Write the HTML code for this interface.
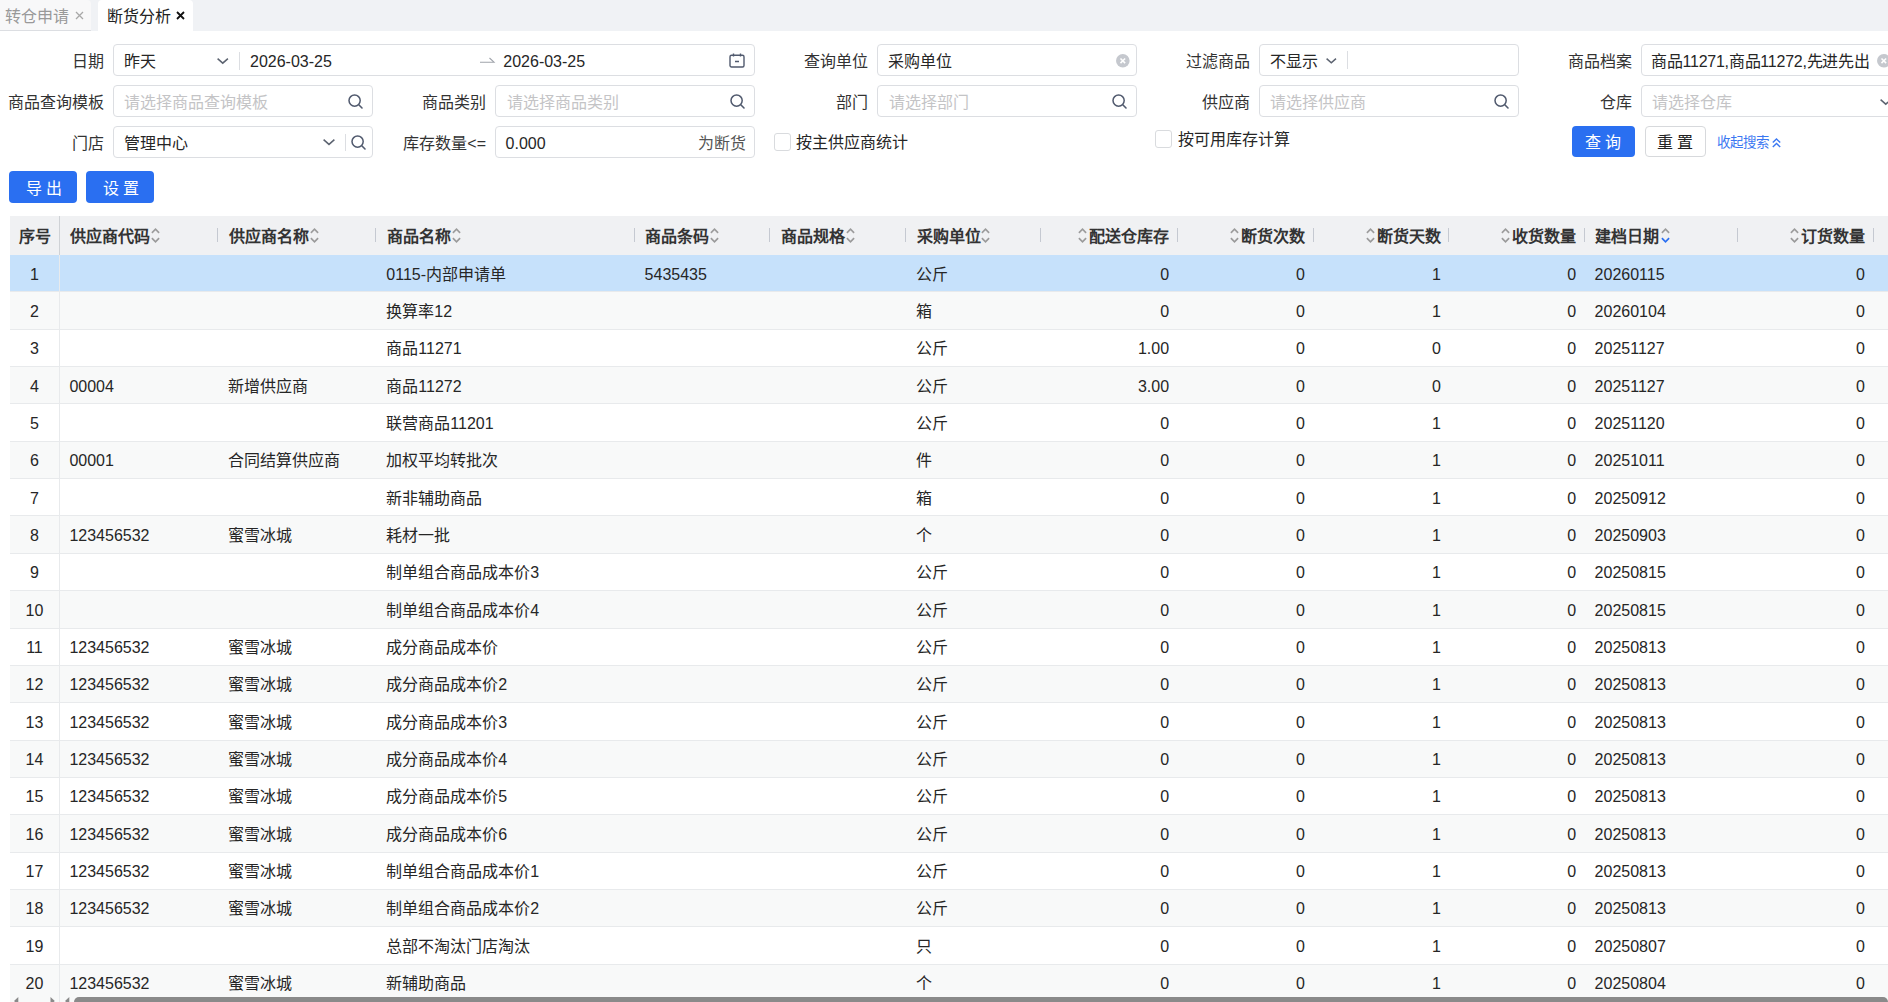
<!DOCTYPE html><html lang="zh-CN"><head><meta charset="utf-8"><style>
*{box-sizing:border-box;margin:0;padding:0}
html,body{width:1888px;height:1002px;overflow:hidden;background:#fff}
body{position:relative;font-family:"Liberation Sans",sans-serif;font-size:16px;color:#333}
.ab{position:absolute;white-space:nowrap}
.t{position:absolute;white-space:nowrap;line-height:20px;height:20px}
.box{position:absolute;border:1px solid #dcdee2;border-radius:4px;background:#fff}
.lab{position:absolute;white-space:nowrap;text-align:right;line-height:20px;color:#333}
.ph{color:#c4c4c6}
.val{color:#262626}
svg{position:absolute;overflow:visible}
.hd{font-weight:bold;color:#333}
</style></head><body>
<div class="ab" style="left:0;top:0;width:1888px;height:31px;background:#f0f2f5"></div>
<div class="ab" style="left:0;top:0;width:91px;height:31px;background:#f8f8f9;border-bottom:1px solid #dcdee2;border-top-right-radius:4px"></div>
<div class="t" style="left:5px;top:7px;color:#999">转仓申请</div>
<svg style="left:75px;top:11px" width="9" height="9" viewBox="0 0 9 9"><path d="M1 1L8 8M8 1L1 8" stroke="#a8a8a8" stroke-width="1.3"/></svg>
<div class="ab" style="left:98px;top:0;width:95px;height:31px;background:#fff;border-radius:4px 4px 0 0"></div>
<div class="t" style="left:107px;top:7px;color:#222">断货分析</div>
<svg style="left:176px;top:11px" width="9" height="9" viewBox="0 0 9 9"><path d="M1 1L8 8M8 1L1 8" stroke="#111" stroke-width="1.8"/></svg>
<div class="lab" style="right:1784.0px;top:51.5px">日期</div>
<div class="box" style="left:113px;top:44px;width:641.6px;height:32px"></div>
<div class="t val" style="left:123.6px;top:51.5px;">昨天</div>
<svg style="left:217px;top:57.6px" width="11.5" height="5.75" viewBox="0 0 11.5 5.75"><path d="M0.6 0.6L5.75 5.15L10.9 0.6" fill="none" stroke="#5c6370" stroke-width="1.5"/></svg>
<div class="ab" style="left:239px;top:52px;width:1px;height:18px;background:#dcdee2"></div>
<div class="t val" style="left:250px;top:51.5px;">2026-03-25</div>
<svg style="left:480px;top:57px" width="15" height="6" viewBox="0 0 15 6"><path d="M0 5.2H14L9.5 1" fill="none" stroke="#a0a4ab" stroke-width="1.1"/></svg>
<div class="t val" style="left:503.3px;top:51.5px;">2026-03-25</div>
<svg style="left:729px;top:53px" width="16" height="15" viewBox="0 0 16 15"><rect x="1" y="2.2" width="14" height="11.8" rx="1.5" fill="none" stroke="#515a6e" stroke-width="1.4"/><path d="M4.5 0.5V3.5M11.5 0.5V3.5M6 8.5H10" stroke="#515a6e" stroke-width="1.4"/></svg>
<div class="lab" style="right:1019.9px;top:51.5px">查询单位</div>
<div class="box" style="left:877px;top:44px;width:259.8px;height:32px"></div>
<div class="t val" style="left:887.8px;top:51.5px;">采购单位</div>
<svg style="left:1115.5px;top:53.6px" width="13.6" height="13.6" viewBox="0 0 14 14"><circle cx="7" cy="7" r="7" fill="#c5c8ce"/><path d="M4.6 4.6L9.4 9.4M9.4 4.6L4.6 9.4" stroke="#fff" stroke-width="1.6"/></svg>
<div class="lab" style="right:637.8px;top:51.5px">过滤商品</div>
<div class="box" style="left:1259px;top:44px;width:259.9px;height:32px"></div>
<div class="t val" style="left:1269.7px;top:51.5px;">不显示</div>
<svg style="left:1326px;top:57.9px" width="10.6" height="5.3" viewBox="0 0 10.6 5.3"><path d="M0.6 0.6L5.3 4.7L10.0 0.6" fill="none" stroke="#5c6370" stroke-width="1.5"/></svg>
<div class="ab" style="left:1346.6px;top:51px;width:1px;height:18px;background:#dcdee2"></div>
<div class="lab" style="right:255.7px;top:51.5px">商品档案</div>
<div class="box" style="left:1641px;top:44px;width:300.8px;height:32px"></div>
<div class="t val" style="left:1651px;top:51.5px;letter-spacing:-0.24px">商品11271,商品11272,先进先出</div>
<svg style="left:1877.2px;top:53.6px" width="13.6" height="13.6" viewBox="0 0 14 14"><circle cx="7" cy="7" r="7" fill="#c5c8ce"/><path d="M4.6 4.6L9.4 9.4M9.4 4.6L4.6 9.4" stroke="#fff" stroke-width="1.6"/></svg>
<div class="lab" style="right:1784.0px;top:92.5px">商品查询模板</div>
<div class="box" style="left:113px;top:85px;width:259.7px;height:32px"></div>
<div class="t ph" style="left:124px;top:92.5px;">请选择商品查询模板</div>
<svg style="left:348px;top:93.5px" width="15" height="15" viewBox="0 0 15 15"><circle cx="6.6" cy="6.6" r="5.6" fill="none" stroke="#515a6e" stroke-width="1.5"/><path d="M10.8 10.8L14 14" stroke="#515a6e" stroke-width="1.6" stroke-linecap="round"/></svg>
<div class="lab" style="right:1402.0px;top:92.5px">商品类别</div>
<div class="box" style="left:495px;top:85px;width:259.7px;height:32px"></div>
<div class="t ph" style="left:506.5px;top:92.5px;">请选择商品类别</div>
<svg style="left:730px;top:93.5px" width="15" height="15" viewBox="0 0 15 15"><circle cx="6.6" cy="6.6" r="5.6" fill="none" stroke="#515a6e" stroke-width="1.5"/><path d="M10.8 10.8L14 14" stroke="#515a6e" stroke-width="1.6" stroke-linecap="round"/></svg>
<div class="lab" style="right:1019.9px;top:92.5px">部门</div>
<div class="box" style="left:877px;top:85px;width:259.8px;height:32px"></div>
<div class="t ph" style="left:888.6px;top:92.5px;">请选择部门</div>
<svg style="left:1112px;top:93.5px" width="15" height="15" viewBox="0 0 15 15"><circle cx="6.6" cy="6.6" r="5.6" fill="none" stroke="#515a6e" stroke-width="1.5"/><path d="M10.8 10.8L14 14" stroke="#515a6e" stroke-width="1.6" stroke-linecap="round"/></svg>
<div class="lab" style="right:637.8px;top:92.5px">供应商</div>
<div class="box" style="left:1259px;top:85px;width:259.9px;height:32px"></div>
<div class="t ph" style="left:1270.3px;top:92.5px;">请选择供应商</div>
<svg style="left:1493.8px;top:93.5px" width="15" height="15" viewBox="0 0 15 15"><circle cx="6.6" cy="6.6" r="5.6" fill="none" stroke="#515a6e" stroke-width="1.5"/><path d="M10.8 10.8L14 14" stroke="#515a6e" stroke-width="1.6" stroke-linecap="round"/></svg>
<div class="lab" style="right:255.7px;top:92.5px">仓库</div>
<div class="box" style="left:1641px;top:85px;width:300.8px;height:32px"></div>
<div class="t ph" style="left:1651.7px;top:92.5px;">请选择仓库</div>
<svg style="left:1879.8px;top:98.6px" width="11.5" height="5.75" viewBox="0 0 11.5 5.75"><path d="M0.6 0.6L5.75 5.15L10.9 0.6" fill="none" stroke="#5c6370" stroke-width="1.5"/></svg>
<div class="lab" style="right:1784.0px;top:133.5px">门店</div>
<div class="box" style="left:113px;top:126px;width:259.7px;height:32px"></div>
<div class="t val" style="left:124px;top:133.5px;">管理中心</div>
<svg style="left:322.5px;top:138.8px" width="12" height="6.0" viewBox="0 0 12 6.0"><path d="M0.6 0.6L6.0 5.4L11.4 0.6" fill="none" stroke="#5c6370" stroke-width="1.5"/></svg>
<div class="ab" style="left:344.5px;top:133.5px;width:1px;height:17.5px;background:#dcdee2"></div>
<svg style="left:350.6px;top:134.5px" width="15" height="15" viewBox="0 0 15 15"><circle cx="6.6" cy="6.6" r="5.6" fill="none" stroke="#515a6e" stroke-width="1.5"/><path d="M10.8 10.8L14 14" stroke="#515a6e" stroke-width="1.6" stroke-linecap="round"/></svg>
<div class="lab" style="right:1402.0px;top:133.5px">库存数量&lt;=</div>
<div class="box" style="left:495px;top:126px;width:259.7px;height:32px"></div>
<div class="t val" style="left:505.6px;top:133.5px;">0.000</div>
<div class="t " style="left:698.4px;top:133.5px;color:#555">为断货</div>
<div class="box" style="left:773.5px;top:133px;width:17.5px;height:17.5px;border-radius:3px;border-color:#d9dbde"></div>
<div class="t" style="left:796.3px;top:132.8px;color:#262626">按主供应商统计</div>
<div class="box" style="left:1154.5px;top:130.3px;width:17.5px;height:17.5px;border-radius:3px;border-color:#d9dbde"></div>
<div class="t" style="left:1177.5px;top:129.8px;color:#262626">按可用库存计算</div>
<div class="ab" style="left:1572px;top:126.2px;width:62.6px;height:31.2px;background:#2a6ff1;border-radius:4px"></div>
<div class="t" style="left:1585px;top:133.2px;color:#fff;letter-spacing:4px;font-weight:500">查询</div>
<div class="box" style="left:1644.5px;top:126.2px;width:61.5px;height:31.2px;border-color:#d7d9dc"></div>
<div class="t" style="left:1657px;top:133.2px;color:#222;letter-spacing:4px;font-weight:500">重置</div>
<div class="t" style="left:1717px;top:132.5px;color:#3b78f2;font-size:13.5px">收起搜索</div>
<svg style="left:1772px;top:137.5px" width="9" height="10" viewBox="0 0 9 10"><path d="M0.8 4.6L4.5 1L8.2 4.6M0.8 9L4.5 5.4L8.2 9" fill="none" stroke="#3b78f2" stroke-width="1.4"/></svg>
<div class="ab" style="left:9.2px;top:171.1px;width:67.8px;height:31.8px;background:#2a6ff1;border-radius:4px"></div>
<div class="t" style="left:26px;top:179px;color:#fff;letter-spacing:4px;font-weight:500">导出</div>
<div class="ab" style="left:86.4px;top:171.1px;width:67.5px;height:31.8px;background:#2a6ff1;border-radius:4px"></div>
<div class="t" style="left:103px;top:179px;color:#fff;letter-spacing:4px;font-weight:500">设置</div>
<div class="ab" style="left:9.5px;top:216.2px;width:1878.5px;height:38.400000000000006px;background:#f0f1f3"></div>
<div class="ab" style="left:9.5px;top:254.60px;width:1878.5px;height:37.34px;background:#c6e1fb"></div>
<div class="t" style="left:9.5px;width:49.9px;text-align:center;top:264.57px;color:#262626">1</div>
<div class="t" style="left:386.3px;top:264.57px;color:#262626">0115-内部申请单</div>
<div class="t" style="left:644.6px;top:264.57px;color:#262626">5435435</div>
<div class="t" style="left:915.8px;top:264.57px;color:#262626">公斤</div>
<div class="t" style="right:718.9px;top:264.57px;color:#262626">0</div>
<div class="t" style="right:583.0px;top:264.57px;color:#262626">0</div>
<div class="t" style="right:447.1px;top:264.57px;color:#262626">1</div>
<div class="t" style="right:311.9px;top:264.57px;color:#262626">0</div>
<div class="t" style="left:1594.6px;top:264.57px;color:#262626">20260115</div>
<div class="t" style="right:23.0px;top:264.57px;color:#262626">0</div>
<div class="ab" style="left:9.5px;top:291.94px;width:1878.5px;height:37.34px;background:#f8f9f9"></div>
<div class="ab" style="left:9.5px;top:291.44px;width:1878.5px;height:1px;background:#e8eaec"></div>
<div class="t" style="left:9.5px;width:49.9px;text-align:center;top:301.91px;color:#262626">2</div>
<div class="t" style="left:386.3px;top:301.91px;color:#262626">换算率12</div>
<div class="t" style="left:915.8px;top:301.91px;color:#262626">箱</div>
<div class="t" style="right:718.9px;top:301.91px;color:#262626">0</div>
<div class="t" style="right:583.0px;top:301.91px;color:#262626">0</div>
<div class="t" style="right:447.1px;top:301.91px;color:#262626">1</div>
<div class="t" style="right:311.9px;top:301.91px;color:#262626">0</div>
<div class="t" style="left:1594.6px;top:301.91px;color:#262626">20260104</div>
<div class="t" style="right:23.0px;top:301.91px;color:#262626">0</div>
<div class="ab" style="left:9.5px;top:329.28px;width:1878.5px;height:37.34px;background:#fff"></div>
<div class="ab" style="left:9.5px;top:328.78px;width:1878.5px;height:1px;background:#e8eaec"></div>
<div class="t" style="left:9.5px;width:49.9px;text-align:center;top:339.25px;color:#262626">3</div>
<div class="t" style="left:386.3px;top:339.25px;color:#262626">商品11271</div>
<div class="t" style="left:915.8px;top:339.25px;color:#262626">公斤</div>
<div class="t" style="right:718.9px;top:339.25px;color:#262626">1.00</div>
<div class="t" style="right:583.0px;top:339.25px;color:#262626">0</div>
<div class="t" style="right:447.1px;top:339.25px;color:#262626">0</div>
<div class="t" style="right:311.9px;top:339.25px;color:#262626">0</div>
<div class="t" style="left:1594.6px;top:339.25px;color:#262626">20251127</div>
<div class="t" style="right:23.0px;top:339.25px;color:#262626">0</div>
<div class="ab" style="left:9.5px;top:366.62px;width:1878.5px;height:37.34px;background:#f8f9f9"></div>
<div class="ab" style="left:9.5px;top:366.12px;width:1878.5px;height:1px;background:#e8eaec"></div>
<div class="t" style="left:9.5px;width:49.9px;text-align:center;top:376.59px;color:#262626">4</div>
<div class="t" style="left:69.4px;top:376.59px;color:#262626">00004</div>
<div class="t" style="left:228.0px;top:376.59px;color:#262626">新增供应商</div>
<div class="t" style="left:386.3px;top:376.59px;color:#262626">商品11272</div>
<div class="t" style="left:915.8px;top:376.59px;color:#262626">公斤</div>
<div class="t" style="right:718.9px;top:376.59px;color:#262626">3.00</div>
<div class="t" style="right:583.0px;top:376.59px;color:#262626">0</div>
<div class="t" style="right:447.1px;top:376.59px;color:#262626">0</div>
<div class="t" style="right:311.9px;top:376.59px;color:#262626">0</div>
<div class="t" style="left:1594.6px;top:376.59px;color:#262626">20251127</div>
<div class="t" style="right:23.0px;top:376.59px;color:#262626">0</div>
<div class="ab" style="left:9.5px;top:403.96px;width:1878.5px;height:37.34px;background:#fff"></div>
<div class="ab" style="left:9.5px;top:403.46px;width:1878.5px;height:1px;background:#e8eaec"></div>
<div class="t" style="left:9.5px;width:49.9px;text-align:center;top:413.93px;color:#262626">5</div>
<div class="t" style="left:386.3px;top:413.93px;color:#262626">联营商品11201</div>
<div class="t" style="left:915.8px;top:413.93px;color:#262626">公斤</div>
<div class="t" style="right:718.9px;top:413.93px;color:#262626">0</div>
<div class="t" style="right:583.0px;top:413.93px;color:#262626">0</div>
<div class="t" style="right:447.1px;top:413.93px;color:#262626">1</div>
<div class="t" style="right:311.9px;top:413.93px;color:#262626">0</div>
<div class="t" style="left:1594.6px;top:413.93px;color:#262626">20251120</div>
<div class="t" style="right:23.0px;top:413.93px;color:#262626">0</div>
<div class="ab" style="left:9.5px;top:441.30px;width:1878.5px;height:37.34px;background:#f8f9f9"></div>
<div class="ab" style="left:9.5px;top:440.80px;width:1878.5px;height:1px;background:#e8eaec"></div>
<div class="t" style="left:9.5px;width:49.9px;text-align:center;top:451.27px;color:#262626">6</div>
<div class="t" style="left:69.4px;top:451.27px;color:#262626">00001</div>
<div class="t" style="left:228.0px;top:451.27px;color:#262626">合同结算供应商</div>
<div class="t" style="left:386.3px;top:451.27px;color:#262626">加权平均转批次</div>
<div class="t" style="left:915.8px;top:451.27px;color:#262626">件</div>
<div class="t" style="right:718.9px;top:451.27px;color:#262626">0</div>
<div class="t" style="right:583.0px;top:451.27px;color:#262626">0</div>
<div class="t" style="right:447.1px;top:451.27px;color:#262626">1</div>
<div class="t" style="right:311.9px;top:451.27px;color:#262626">0</div>
<div class="t" style="left:1594.6px;top:451.27px;color:#262626">20251011</div>
<div class="t" style="right:23.0px;top:451.27px;color:#262626">0</div>
<div class="ab" style="left:9.5px;top:478.64px;width:1878.5px;height:37.34px;background:#fff"></div>
<div class="ab" style="left:9.5px;top:478.14px;width:1878.5px;height:1px;background:#e8eaec"></div>
<div class="t" style="left:9.5px;width:49.9px;text-align:center;top:488.61px;color:#262626">7</div>
<div class="t" style="left:386.3px;top:488.61px;color:#262626">新非辅助商品</div>
<div class="t" style="left:915.8px;top:488.61px;color:#262626">箱</div>
<div class="t" style="right:718.9px;top:488.61px;color:#262626">0</div>
<div class="t" style="right:583.0px;top:488.61px;color:#262626">0</div>
<div class="t" style="right:447.1px;top:488.61px;color:#262626">1</div>
<div class="t" style="right:311.9px;top:488.61px;color:#262626">0</div>
<div class="t" style="left:1594.6px;top:488.61px;color:#262626">20250912</div>
<div class="t" style="right:23.0px;top:488.61px;color:#262626">0</div>
<div class="ab" style="left:9.5px;top:515.98px;width:1878.5px;height:37.34px;background:#f8f9f9"></div>
<div class="ab" style="left:9.5px;top:515.48px;width:1878.5px;height:1px;background:#e8eaec"></div>
<div class="t" style="left:9.5px;width:49.9px;text-align:center;top:525.95px;color:#262626">8</div>
<div class="t" style="left:69.4px;top:525.95px;color:#262626">123456532</div>
<div class="t" style="left:228.0px;top:525.95px;color:#262626">蜜雪冰城</div>
<div class="t" style="left:386.3px;top:525.95px;color:#262626">耗材一批</div>
<div class="t" style="left:915.8px;top:525.95px;color:#262626">个</div>
<div class="t" style="right:718.9px;top:525.95px;color:#262626">0</div>
<div class="t" style="right:583.0px;top:525.95px;color:#262626">0</div>
<div class="t" style="right:447.1px;top:525.95px;color:#262626">1</div>
<div class="t" style="right:311.9px;top:525.95px;color:#262626">0</div>
<div class="t" style="left:1594.6px;top:525.95px;color:#262626">20250903</div>
<div class="t" style="right:23.0px;top:525.95px;color:#262626">0</div>
<div class="ab" style="left:9.5px;top:553.32px;width:1878.5px;height:37.34px;background:#fff"></div>
<div class="ab" style="left:9.5px;top:552.82px;width:1878.5px;height:1px;background:#e8eaec"></div>
<div class="t" style="left:9.5px;width:49.9px;text-align:center;top:563.29px;color:#262626">9</div>
<div class="t" style="left:386.3px;top:563.29px;color:#262626">制单组合商品成本价3</div>
<div class="t" style="left:915.8px;top:563.29px;color:#262626">公斤</div>
<div class="t" style="right:718.9px;top:563.29px;color:#262626">0</div>
<div class="t" style="right:583.0px;top:563.29px;color:#262626">0</div>
<div class="t" style="right:447.1px;top:563.29px;color:#262626">1</div>
<div class="t" style="right:311.9px;top:563.29px;color:#262626">0</div>
<div class="t" style="left:1594.6px;top:563.29px;color:#262626">20250815</div>
<div class="t" style="right:23.0px;top:563.29px;color:#262626">0</div>
<div class="ab" style="left:9.5px;top:590.66px;width:1878.5px;height:37.34px;background:#f8f9f9"></div>
<div class="ab" style="left:9.5px;top:590.16px;width:1878.5px;height:1px;background:#e8eaec"></div>
<div class="t" style="left:9.5px;width:49.9px;text-align:center;top:600.63px;color:#262626">10</div>
<div class="t" style="left:386.3px;top:600.63px;color:#262626">制单组合商品成本价4</div>
<div class="t" style="left:915.8px;top:600.63px;color:#262626">公斤</div>
<div class="t" style="right:718.9px;top:600.63px;color:#262626">0</div>
<div class="t" style="right:583.0px;top:600.63px;color:#262626">0</div>
<div class="t" style="right:447.1px;top:600.63px;color:#262626">1</div>
<div class="t" style="right:311.9px;top:600.63px;color:#262626">0</div>
<div class="t" style="left:1594.6px;top:600.63px;color:#262626">20250815</div>
<div class="t" style="right:23.0px;top:600.63px;color:#262626">0</div>
<div class="ab" style="left:9.5px;top:628.00px;width:1878.5px;height:37.34px;background:#fff"></div>
<div class="ab" style="left:9.5px;top:627.50px;width:1878.5px;height:1px;background:#e8eaec"></div>
<div class="t" style="left:9.5px;width:49.9px;text-align:center;top:637.97px;color:#262626">11</div>
<div class="t" style="left:69.4px;top:637.97px;color:#262626">123456532</div>
<div class="t" style="left:228.0px;top:637.97px;color:#262626">蜜雪冰城</div>
<div class="t" style="left:386.3px;top:637.97px;color:#262626">成分商品成本价</div>
<div class="t" style="left:915.8px;top:637.97px;color:#262626">公斤</div>
<div class="t" style="right:718.9px;top:637.97px;color:#262626">0</div>
<div class="t" style="right:583.0px;top:637.97px;color:#262626">0</div>
<div class="t" style="right:447.1px;top:637.97px;color:#262626">1</div>
<div class="t" style="right:311.9px;top:637.97px;color:#262626">0</div>
<div class="t" style="left:1594.6px;top:637.97px;color:#262626">20250813</div>
<div class="t" style="right:23.0px;top:637.97px;color:#262626">0</div>
<div class="ab" style="left:9.5px;top:665.34px;width:1878.5px;height:37.34px;background:#f8f9f9"></div>
<div class="ab" style="left:9.5px;top:664.84px;width:1878.5px;height:1px;background:#e8eaec"></div>
<div class="t" style="left:9.5px;width:49.9px;text-align:center;top:675.31px;color:#262626">12</div>
<div class="t" style="left:69.4px;top:675.31px;color:#262626">123456532</div>
<div class="t" style="left:228.0px;top:675.31px;color:#262626">蜜雪冰城</div>
<div class="t" style="left:386.3px;top:675.31px;color:#262626">成分商品成本价2</div>
<div class="t" style="left:915.8px;top:675.31px;color:#262626">公斤</div>
<div class="t" style="right:718.9px;top:675.31px;color:#262626">0</div>
<div class="t" style="right:583.0px;top:675.31px;color:#262626">0</div>
<div class="t" style="right:447.1px;top:675.31px;color:#262626">1</div>
<div class="t" style="right:311.9px;top:675.31px;color:#262626">0</div>
<div class="t" style="left:1594.6px;top:675.31px;color:#262626">20250813</div>
<div class="t" style="right:23.0px;top:675.31px;color:#262626">0</div>
<div class="ab" style="left:9.5px;top:702.68px;width:1878.5px;height:37.34px;background:#fff"></div>
<div class="ab" style="left:9.5px;top:702.18px;width:1878.5px;height:1px;background:#e8eaec"></div>
<div class="t" style="left:9.5px;width:49.9px;text-align:center;top:712.65px;color:#262626">13</div>
<div class="t" style="left:69.4px;top:712.65px;color:#262626">123456532</div>
<div class="t" style="left:228.0px;top:712.65px;color:#262626">蜜雪冰城</div>
<div class="t" style="left:386.3px;top:712.65px;color:#262626">成分商品成本价3</div>
<div class="t" style="left:915.8px;top:712.65px;color:#262626">公斤</div>
<div class="t" style="right:718.9px;top:712.65px;color:#262626">0</div>
<div class="t" style="right:583.0px;top:712.65px;color:#262626">0</div>
<div class="t" style="right:447.1px;top:712.65px;color:#262626">1</div>
<div class="t" style="right:311.9px;top:712.65px;color:#262626">0</div>
<div class="t" style="left:1594.6px;top:712.65px;color:#262626">20250813</div>
<div class="t" style="right:23.0px;top:712.65px;color:#262626">0</div>
<div class="ab" style="left:9.5px;top:740.02px;width:1878.5px;height:37.34px;background:#f8f9f9"></div>
<div class="ab" style="left:9.5px;top:739.52px;width:1878.5px;height:1px;background:#e8eaec"></div>
<div class="t" style="left:9.5px;width:49.9px;text-align:center;top:749.99px;color:#262626">14</div>
<div class="t" style="left:69.4px;top:749.99px;color:#262626">123456532</div>
<div class="t" style="left:228.0px;top:749.99px;color:#262626">蜜雪冰城</div>
<div class="t" style="left:386.3px;top:749.99px;color:#262626">成分商品成本价4</div>
<div class="t" style="left:915.8px;top:749.99px;color:#262626">公斤</div>
<div class="t" style="right:718.9px;top:749.99px;color:#262626">0</div>
<div class="t" style="right:583.0px;top:749.99px;color:#262626">0</div>
<div class="t" style="right:447.1px;top:749.99px;color:#262626">1</div>
<div class="t" style="right:311.9px;top:749.99px;color:#262626">0</div>
<div class="t" style="left:1594.6px;top:749.99px;color:#262626">20250813</div>
<div class="t" style="right:23.0px;top:749.99px;color:#262626">0</div>
<div class="ab" style="left:9.5px;top:777.36px;width:1878.5px;height:37.34px;background:#fff"></div>
<div class="ab" style="left:9.5px;top:776.86px;width:1878.5px;height:1px;background:#e8eaec"></div>
<div class="t" style="left:9.5px;width:49.9px;text-align:center;top:787.33px;color:#262626">15</div>
<div class="t" style="left:69.4px;top:787.33px;color:#262626">123456532</div>
<div class="t" style="left:228.0px;top:787.33px;color:#262626">蜜雪冰城</div>
<div class="t" style="left:386.3px;top:787.33px;color:#262626">成分商品成本价5</div>
<div class="t" style="left:915.8px;top:787.33px;color:#262626">公斤</div>
<div class="t" style="right:718.9px;top:787.33px;color:#262626">0</div>
<div class="t" style="right:583.0px;top:787.33px;color:#262626">0</div>
<div class="t" style="right:447.1px;top:787.33px;color:#262626">1</div>
<div class="t" style="right:311.9px;top:787.33px;color:#262626">0</div>
<div class="t" style="left:1594.6px;top:787.33px;color:#262626">20250813</div>
<div class="t" style="right:23.0px;top:787.33px;color:#262626">0</div>
<div class="ab" style="left:9.5px;top:814.70px;width:1878.5px;height:37.34px;background:#f8f9f9"></div>
<div class="ab" style="left:9.5px;top:814.20px;width:1878.5px;height:1px;background:#e8eaec"></div>
<div class="t" style="left:9.5px;width:49.9px;text-align:center;top:824.67px;color:#262626">16</div>
<div class="t" style="left:69.4px;top:824.67px;color:#262626">123456532</div>
<div class="t" style="left:228.0px;top:824.67px;color:#262626">蜜雪冰城</div>
<div class="t" style="left:386.3px;top:824.67px;color:#262626">成分商品成本价6</div>
<div class="t" style="left:915.8px;top:824.67px;color:#262626">公斤</div>
<div class="t" style="right:718.9px;top:824.67px;color:#262626">0</div>
<div class="t" style="right:583.0px;top:824.67px;color:#262626">0</div>
<div class="t" style="right:447.1px;top:824.67px;color:#262626">1</div>
<div class="t" style="right:311.9px;top:824.67px;color:#262626">0</div>
<div class="t" style="left:1594.6px;top:824.67px;color:#262626">20250813</div>
<div class="t" style="right:23.0px;top:824.67px;color:#262626">0</div>
<div class="ab" style="left:9.5px;top:852.04px;width:1878.5px;height:37.34px;background:#fff"></div>
<div class="ab" style="left:9.5px;top:851.54px;width:1878.5px;height:1px;background:#e8eaec"></div>
<div class="t" style="left:9.5px;width:49.9px;text-align:center;top:862.01px;color:#262626">17</div>
<div class="t" style="left:69.4px;top:862.01px;color:#262626">123456532</div>
<div class="t" style="left:228.0px;top:862.01px;color:#262626">蜜雪冰城</div>
<div class="t" style="left:386.3px;top:862.01px;color:#262626">制单组合商品成本价1</div>
<div class="t" style="left:915.8px;top:862.01px;color:#262626">公斤</div>
<div class="t" style="right:718.9px;top:862.01px;color:#262626">0</div>
<div class="t" style="right:583.0px;top:862.01px;color:#262626">0</div>
<div class="t" style="right:447.1px;top:862.01px;color:#262626">1</div>
<div class="t" style="right:311.9px;top:862.01px;color:#262626">0</div>
<div class="t" style="left:1594.6px;top:862.01px;color:#262626">20250813</div>
<div class="t" style="right:23.0px;top:862.01px;color:#262626">0</div>
<div class="ab" style="left:9.5px;top:889.38px;width:1878.5px;height:37.34px;background:#f8f9f9"></div>
<div class="ab" style="left:9.5px;top:888.88px;width:1878.5px;height:1px;background:#e8eaec"></div>
<div class="t" style="left:9.5px;width:49.9px;text-align:center;top:899.35px;color:#262626">18</div>
<div class="t" style="left:69.4px;top:899.35px;color:#262626">123456532</div>
<div class="t" style="left:228.0px;top:899.35px;color:#262626">蜜雪冰城</div>
<div class="t" style="left:386.3px;top:899.35px;color:#262626">制单组合商品成本价2</div>
<div class="t" style="left:915.8px;top:899.35px;color:#262626">公斤</div>
<div class="t" style="right:718.9px;top:899.35px;color:#262626">0</div>
<div class="t" style="right:583.0px;top:899.35px;color:#262626">0</div>
<div class="t" style="right:447.1px;top:899.35px;color:#262626">1</div>
<div class="t" style="right:311.9px;top:899.35px;color:#262626">0</div>
<div class="t" style="left:1594.6px;top:899.35px;color:#262626">20250813</div>
<div class="t" style="right:23.0px;top:899.35px;color:#262626">0</div>
<div class="ab" style="left:9.5px;top:926.72px;width:1878.5px;height:37.34px;background:#fff"></div>
<div class="ab" style="left:9.5px;top:926.22px;width:1878.5px;height:1px;background:#e8eaec"></div>
<div class="t" style="left:9.5px;width:49.9px;text-align:center;top:936.69px;color:#262626">19</div>
<div class="t" style="left:386.3px;top:936.69px;color:#262626">总部不淘汰门店淘汰</div>
<div class="t" style="left:915.8px;top:936.69px;color:#262626">只</div>
<div class="t" style="right:718.9px;top:936.69px;color:#262626">0</div>
<div class="t" style="right:583.0px;top:936.69px;color:#262626">0</div>
<div class="t" style="right:447.1px;top:936.69px;color:#262626">1</div>
<div class="t" style="right:311.9px;top:936.69px;color:#262626">0</div>
<div class="t" style="left:1594.6px;top:936.69px;color:#262626">20250807</div>
<div class="t" style="right:23.0px;top:936.69px;color:#262626">0</div>
<div class="ab" style="left:9.5px;top:964.06px;width:1878.5px;height:37.94px;background:#f8f9f9"></div>
<div class="ab" style="left:9.5px;top:963.56px;width:1878.5px;height:1px;background:#e8eaec"></div>
<div class="t" style="left:9.5px;width:49.9px;text-align:center;top:974.03px;color:#262626">20</div>
<div class="t" style="left:69.4px;top:974.03px;color:#262626">123456532</div>
<div class="t" style="left:228.0px;top:974.03px;color:#262626">蜜雪冰城</div>
<div class="t" style="left:386.3px;top:974.03px;color:#262626">新辅助商品</div>
<div class="t" style="left:915.8px;top:974.03px;color:#262626">个</div>
<div class="t" style="right:718.9px;top:974.03px;color:#262626">0</div>
<div class="t" style="right:583.0px;top:974.03px;color:#262626">0</div>
<div class="t" style="right:447.1px;top:974.03px;color:#262626">1</div>
<div class="t" style="right:311.9px;top:974.03px;color:#262626">0</div>
<div class="t" style="left:1594.6px;top:974.03px;color:#262626">20250804</div>
<div class="t" style="right:23.0px;top:974.03px;color:#262626">0</div>
<div class="ab" style="left:59px;top:216.2px;width:1px;height:38.400000000000006px;background:#cfd2d6"></div>
<div class="ab" style="left:59px;top:254.6px;width:1px;height:747.4px;background:#e8eaec"></div>
<div class="t hd" style="left:9.5px;width:50px;text-align:center;top:226.9px">序号</div>
<div class="t hd" style="left:70.1px;top:226.9px">供应商代码</div>
<svg style="left:150.9px;top:228px" width="9" height="15" viewBox="0 0 9 15"><path d="M0.9 4.8L4.5 1.2L8.1 4.8" fill="none" stroke="#9c9c9c" stroke-width="1.7"/><path d="M0.9 10.2L4.5 13.8L8.1 10.2" fill="none" stroke="#9a9a9a" stroke-width="1.7"/></svg>
<div class="t hd" style="left:228.7px;top:226.9px">供应商名称</div>
<svg style="left:309.5px;top:228px" width="9" height="15" viewBox="0 0 9 15"><path d="M0.9 4.8L4.5 1.2L8.1 4.8" fill="none" stroke="#9c9c9c" stroke-width="1.7"/><path d="M0.9 10.2L4.5 13.8L8.1 10.2" fill="none" stroke="#9a9a9a" stroke-width="1.7"/></svg>
<div class="t hd" style="left:387.0px;top:226.9px">商品名称</div>
<svg style="left:451.8px;top:228px" width="9" height="15" viewBox="0 0 9 15"><path d="M0.9 4.8L4.5 1.2L8.1 4.8" fill="none" stroke="#9c9c9c" stroke-width="1.7"/><path d="M0.9 10.2L4.5 13.8L8.1 10.2" fill="none" stroke="#9a9a9a" stroke-width="1.7"/></svg>
<div class="t hd" style="left:645.3px;top:226.9px">商品条码</div>
<svg style="left:710.1px;top:228px" width="9" height="15" viewBox="0 0 9 15"><path d="M0.9 4.8L4.5 1.2L8.1 4.8" fill="none" stroke="#9c9c9c" stroke-width="1.7"/><path d="M0.9 10.2L4.5 13.8L8.1 10.2" fill="none" stroke="#9a9a9a" stroke-width="1.7"/></svg>
<div class="t hd" style="left:780.9px;top:226.9px">商品规格</div>
<svg style="left:845.7px;top:228px" width="9" height="15" viewBox="0 0 9 15"><path d="M0.9 4.8L4.5 1.2L8.1 4.8" fill="none" stroke="#9c9c9c" stroke-width="1.7"/><path d="M0.9 10.2L4.5 13.8L8.1 10.2" fill="none" stroke="#9a9a9a" stroke-width="1.7"/></svg>
<div class="t hd" style="left:916.5px;top:226.9px">采购单位</div>
<svg style="left:981.3px;top:228px" width="9" height="15" viewBox="0 0 9 15"><path d="M0.9 4.8L4.5 1.2L8.1 4.8" fill="none" stroke="#9c9c9c" stroke-width="1.7"/><path d="M0.9 10.2L4.5 13.8L8.1 10.2" fill="none" stroke="#9a9a9a" stroke-width="1.7"/></svg>
<div class="t hd" style="right:718.9px;top:226.9px">配送仓库存</div>
<svg style="left:1078.1px;top:228px" width="9" height="15" viewBox="0 0 9 15"><path d="M0.9 4.8L4.5 1.2L8.1 4.8" fill="none" stroke="#9c9c9c" stroke-width="1.7"/><path d="M0.9 10.2L4.5 13.8L8.1 10.2" fill="none" stroke="#9a9a9a" stroke-width="1.7"/></svg>
<div class="t hd" style="right:583.0px;top:226.9px">断货次数</div>
<svg style="left:1230.0px;top:228px" width="9" height="15" viewBox="0 0 9 15"><path d="M0.9 4.8L4.5 1.2L8.1 4.8" fill="none" stroke="#9c9c9c" stroke-width="1.7"/><path d="M0.9 10.2L4.5 13.8L8.1 10.2" fill="none" stroke="#9a9a9a" stroke-width="1.7"/></svg>
<div class="t hd" style="right:447.1px;top:226.9px">断货天数</div>
<svg style="left:1365.9px;top:228px" width="9" height="15" viewBox="0 0 9 15"><path d="M0.9 4.8L4.5 1.2L8.1 4.8" fill="none" stroke="#9c9c9c" stroke-width="1.7"/><path d="M0.9 10.2L4.5 13.8L8.1 10.2" fill="none" stroke="#9a9a9a" stroke-width="1.7"/></svg>
<div class="t hd" style="right:311.9px;top:226.9px">收货数量</div>
<svg style="left:1501.1px;top:228px" width="9" height="15" viewBox="0 0 9 15"><path d="M0.9 4.8L4.5 1.2L8.1 4.8" fill="none" stroke="#9c9c9c" stroke-width="1.7"/><path d="M0.9 10.2L4.5 13.8L8.1 10.2" fill="none" stroke="#9a9a9a" stroke-width="1.7"/></svg>
<div class="t hd" style="right:23.0px;top:226.9px">订货数量</div>
<svg style="left:1790.0px;top:228px" width="9" height="15" viewBox="0 0 9 15"><path d="M0.9 4.8L4.5 1.2L8.1 4.8" fill="none" stroke="#9c9c9c" stroke-width="1.7"/><path d="M0.9 10.2L4.5 13.8L8.1 10.2" fill="none" stroke="#9a9a9a" stroke-width="1.7"/></svg>
<div class="t hd" style="left:1594.8px;top:226.9px">建档日期</div>
<svg style="left:1660.5px;top:228px" width="9" height="15" viewBox="0 0 9 15"><path d="M0.9 4.8L4.5 1.2L8.1 4.8" fill="none" stroke="#9c9c9c" stroke-width="1.7"/><path d="M0.9 10.2L4.5 13.8L8.1 10.2" fill="none" stroke="#2a6ff1" stroke-width="1.7"/></svg>
<div class="ab" style="left:217px;top:228px;width:1px;height:14px;background:#c5c9d1"></div>
<div class="ab" style="left:375.3px;top:228px;width:1px;height:14px;background:#c5c9d1"></div>
<div class="ab" style="left:633.6px;top:228px;width:1px;height:14px;background:#c5c9d1"></div>
<div class="ab" style="left:769.2px;top:228px;width:1px;height:14px;background:#c5c9d1"></div>
<div class="ab" style="left:904.8px;top:228px;width:1px;height:14px;background:#c5c9d1"></div>
<div class="ab" style="left:1040.4px;top:228px;width:1px;height:14px;background:#c5c9d1"></div>
<div class="ab" style="left:1176.6px;top:228px;width:1px;height:14px;background:#c5c9d1"></div>
<div class="ab" style="left:1312.5px;top:228px;width:1px;height:14px;background:#c5c9d1"></div>
<div class="ab" style="left:1448.4px;top:228px;width:1px;height:14px;background:#c5c9d1"></div>
<div class="ab" style="left:1583.6px;top:228px;width:1px;height:14px;background:#c5c9d1"></div>
<div class="ab" style="left:1736.7px;top:228px;width:1px;height:14px;background:#c5c9d1"></div>
<div class="ab" style="left:1872.5px;top:228px;width:1px;height:14px;background:#c5c9d1"></div>
<div class="ab" style="left:74px;top:996.9px;width:1814px;height:10px;background:#8a8a8a;border-radius:5px"></div>
<svg style="left:14px;top:997px" width="5" height="5" viewBox="0 0 5 5"><path d="M4.3 0V8L0 4Z" fill="#8a8a8a"/></svg>
<svg style="left:50px;top:997px" width="5" height="5" viewBox="0 0 5 5"><path d="M0.5 0V8L4.8 4Z" fill="#8a8a8a"/></svg>
<svg style="left:64.6px;top:997px" width="5" height="5" viewBox="0 0 5 5"><path d="M4.3 0V8L0 4Z" fill="#8a8a8a"/></svg>
</body></html>
